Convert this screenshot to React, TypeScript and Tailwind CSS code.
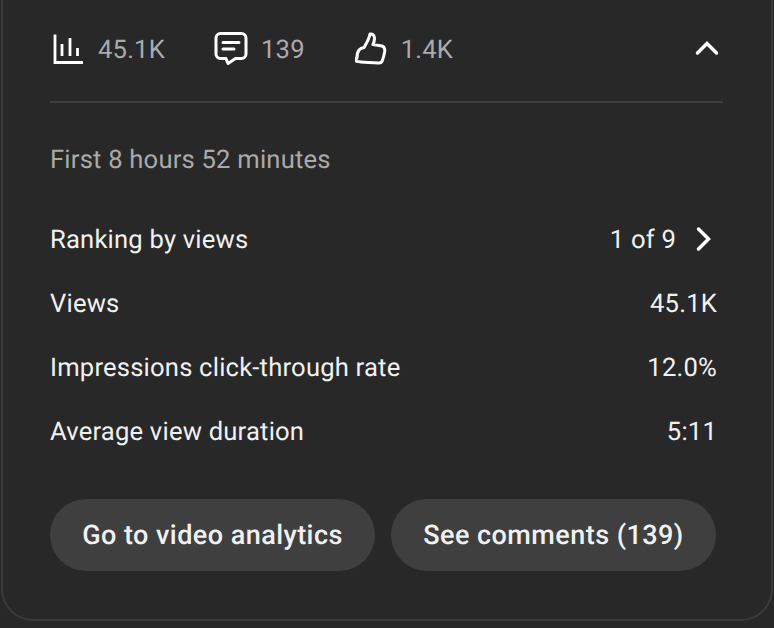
export default function App() {
  const rows: [string, string][] = [
    ["Views", "45.1K"],
    ["Impressions click-through rate", "12.0%"],
    ["Average view duration", "5:11"],
  ];
  return (
    <div className="h-[628px] w-[774px] overflow-hidden bg-[#282828] font-['Roboto',sans-serif] tracking-[0.2px] antialiased [text-rendering:geometricPrecision]">
      <div className="mx-[1px] h-[621px] rounded-b-[32px] border-x-2 border-b-2 border-[#3a3a3a] pl-[47px] pr-[48px]">
        <div className="flex h-[103px] items-center justify-between border-b-2 border-[#3e3e3e] pb-[2px] pl-[2px]">
          <div className="flex items-center text-[25.6px] text-[#aaaaaa]">
            <svg width="32" height="32" viewBox="0 0 32 32" fill="none" stroke="#fff" className="mr-[14px]">
              <path d="M3 1.500V29.500h28" strokeWidth="2.800" />
              <path d="M10 11V23M18 5V23M25.500 15V23" strokeWidth="2.800" />
            </svg>
            <span className="mt-[2px]">45.1K</span>
            <svg width="36" height="36" viewBox="0 0 36 36" fill="none" stroke="#fff" strokeWidth="3" strokeLinejoin="round" strokeLinecap="round" className="ml-[48px] mr-[12px]">
              <path d="M7.500 2.500h21a4.500 4.500 0 0 1 4.500 4.500v16a4.500 4.500 0 0 1-4.500 4.500H22.500l-7.500 5-2-5H7.500a4.500 4.500 0 0 1-4.500-4.500V7a4.500 4.500 0 0 1 4.500-4.500Z" />
              <path d="M10 11.500h16M10 18h11" />
            </svg>
            <span className="mt-[2px]">139</span>
            <svg width="32" height="34" viewBox="0 0 32 34" fill="none" stroke="#fff" strokeWidth="3" strokeLinejoin="round" strokeLinecap="round" className="ml-[50px] mr-[14px]">
              <path d="M2 26c0-2.500 .5-6 2-8 1-1 2.500-2 5-2.500 2-3.500 5-8 6-13.500 2.500-.5 4.500 1.500 4.500 4 0 2.500-.5 4.500-1.500 6.500l9 1.500c1.800.5 3 2.500 2.700 5.500-.5 3-1.500 7-2.500 9.500-.5 1.500-2 2.200-4 2-5-.2-10-.5-14-.7-3-.1-5-.5-7.700-1-.5-1.500-.5-2-.5-3.300Z" />
            </svg>
            <span className="mt-[2px]">1.4K</span>
          </div>
          <svg width="26" height="16" viewBox="0 0 26 16" fill="none" stroke="#fff" strokeWidth="3.500" strokeLinecap="round" className="mr-[3px] mb-[4px]">
            <path d="M3.500 13 13 3.500l9.500 9.500" />
          </svg>
        </div>
        <div className="mt-[42px] text-[25.6px] leading-[30px] text-[#aaaaaa]">First 8 hours 52 minutes</div>
        <div className="mt-[33px] flex h-[64px] items-center justify-between text-[25.6px] text-[#f1f1f1]">
          <span>Ranking by views</span>
          <span className="flex items-center pr-[11px]">
            1 of 9
            <svg width="16" height="26" viewBox="0 0 16 26" fill="none" stroke="#fff" strokeWidth="3.500" strokeLinecap="round" className="mb-[2px] ml-[20px]">
              <path d="M2.500 3 12.500 13 2.500 23" />
            </svg>
          </span>
        </div>
        {rows.map(([k, v]) => (
          <div key={k} className="flex h-[64px] items-center justify-between pr-[6px] text-[25.6px] text-[#f1f1f1]">
            <span>{k}</span>
            <span>{v}</span>
          </div>
        ))}
        <div className="mt-[35px] flex gap-[16px]">
          <div className="flex h-[72px] w-[325px] items-center justify-center rounded-full bg-[#3f3f3f] text-[27px] font-medium tracking-[0.45px] text-[#f1f1f1]">Go to video analytics</div>
          <div className="flex h-[72px] w-[325px] items-center justify-center rounded-full bg-[#3f3f3f] text-[27px] font-medium tracking-[0.45px] text-[#f1f1f1]">See comments (139)</div>
        </div>
      </div>
    </div>
  );
}
